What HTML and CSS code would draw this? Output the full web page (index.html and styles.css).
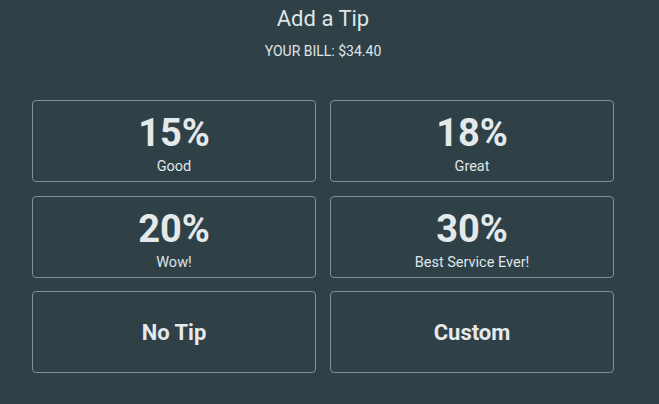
FILE: index.html
```html
<!DOCTYPE html>
<html>
<head>
<meta charset="utf-8">
<link rel="stylesheet" href="styles.css">
</head>
<body>
<div class="page">
  <header class="head">
    <h1 class="title">Add a Tip</h1>
    <div class="bill">YOUR BILL: $34.40</div>
  </header>
  <div class="grid">
    <div class="card"><div class="pct">15%</div><div class="label">Good</div></div>
    <div class="card"><div class="pct">18%</div><div class="label">Great</div></div>
    <div class="card"><div class="pct">20%</div><div class="label">Wow!</div></div>
    <div class="card"><div class="pct">30%</div><div class="label">Best Service Ever!</div></div>
    <div class="card card-opt"><div class="opt">No Tip</div></div>
    <div class="card card-opt"><div class="opt">Custom</div></div>
  </div>
</div>
</body>
</html>
```
FILE: styles.css
```css
html, body {
  margin: 0;
  padding: 0;
  background: #2f4047;
  font-family: Roboto, "Liberation Sans", sans-serif;
  color: #e3e8ea;
}
.page {
  width: 582px;
  margin-left: 32px;
  padding-top: 6px;
}
.head {
  display: flex;
  flex-direction: column;
  align-items: center;
}
.title {
  margin: 0;
  font-size: 22px;
  font-weight: 400;
  line-height: 26px;
  color: #dfe5e8;
}
.bill {
  margin-top: 11px;
  font-size: 14px;
  line-height: 16px;
  color: #dfe5e8;
}
.grid {
  margin-top: 41px;
  display: grid;
  grid-template-columns: 1fr 1fr;
  column-gap: 14px;
  row-gap: 13.5px;
}
.card {
  box-sizing: border-box;
  height: 82px;
  padding-top: 13px;
  border: 1px solid #7f9198;
  border-radius: 4px;
  display: flex;
  flex-direction: column;
  align-items: center;
}
.card-opt {
  padding-top: 0;
  justify-content: center;
}
.pct {
  font-size: 38px;
  font-weight: 700;
  line-height: 38px;
  color: #e4e9eb;
}
.label {
  font-size: 14.5px;
  line-height: 16px;
  margin-top: 7px;
  color: #dfe5e8;
}
.opt {
  font-size: 22px;
  font-weight: 700;
  color: #e4e9eb;
}
```
